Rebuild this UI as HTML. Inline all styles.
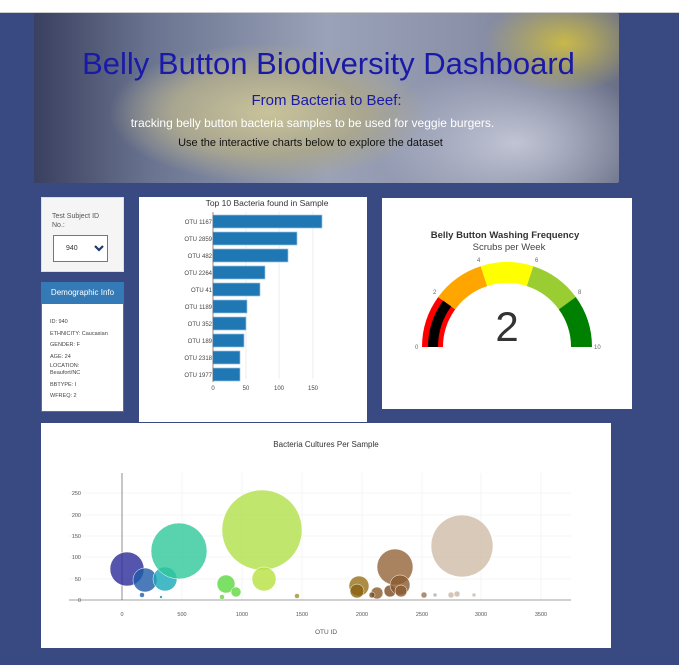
<!DOCTYPE html>
<html><head><style>
body{margin:0;width:679px;height:665px;background:#394a82;position:relative;overflow:hidden;font-family:"Liberation Sans",sans-serif}
.top{position:absolute;left:0;top:0;width:679px;height:12px;background:#fff;border-bottom:1px solid #ccc}
.banner{position:absolute;left:34px;top:13px;width:585px;height:170px;overflow:hidden;border-radius:2px;
background:radial-gradient(ellipse 160px 70px at 235px 100px,#c9c39a 0%,#a9a690 60%,rgba(140,150,170,0) 100%),
radial-gradient(ellipse 80px 50px at 530px 30px,#c8b84a 0%,rgba(150,150,120,0) 100%),
radial-gradient(ellipse 140px 80px at 480px 130px,#c0c4d4 0%,rgba(120,130,160,0) 100%),
linear-gradient(90deg,#3a4060 0%,#6a7490 20%,#9aa2b8 50%,#8a90a8 75%,#6a7088 100%)}
.banner div{position:absolute;width:100%;text-align:center}
.panel{position:absolute;background:#fff}
</style></head><body>
<div class="top"></div>
<div class="banner">
<div style="top:33px;left:2px;font-size:31px;color:#1a1aa8">Belly Button Biodiversity Dashboard</div>
<div style="top:79px;left:0;font-size:15px;color:#1a1aa8">From Bacteria to Beef:</div>
<div style="top:103px;left:-14px;font-size:12px;color:#fff">tracking belly button bacteria samples to be used for veggie burgers.</div>
<div style="top:124px;left:-16px;font-size:11px;color:#111">Use the interactive charts below to explore the dataset</div>
</div>
<div class="panel" style="left:41px;top:197px;width:83px;height:75px;background:#f5f5f5;border:1px solid #ddd;box-sizing:border-box">
<div style="position:absolute;left:10px;top:14px;font-size:7px;color:#555;line-height:9px">Test Subject ID<br>No.:</div>
<div style="position:absolute;left:11px;top:37px;width:55px;height:27px;border:1px solid #777;background:#fff;box-sizing:border-box">
<span style="position:absolute;left:12px;top:9px;font-size:7px;color:#333">940</span>
<svg style="position:absolute;left:40px;top:9px" width="10" height="7"><path d="M1 1L5 5L9 1" stroke="#1d3a6e" stroke-width="2.2" fill="none"/></svg>
</div></div>
<div class="panel" style="left:41px;top:282px;width:83px;height:130px;border:1px solid #337ab7;box-sizing:border-box">
<div style="height:21px;background:#337ab7;color:#fff;font-size:8px;text-align:center;line-height:20px">Demographic Info</div>
<div style="padding:13px 0 0 8px;font-size:5.5px;color:#444;line-height:11.5px">ID: 940<br>ETHNICITY: Caucasian<br>GENDER: F<br>AGE: 24<br><span style="line-height:7px;display:inline-block">LOCATION:<br>Beaufort/NC</span><br>BBTYPE: I<br>WFREQ: 2</div>
</div>
<div class="panel" style="left:139px;top:197px;width:228px;height:225px">
<svg width="228" height="225" font-family="Liberation Sans" font-size="6" fill="#444">
<text x="128" y="9" font-size="8.5" text-anchor="middle" fill="#333">Top 10 Bacteria found in Sample</text>
<g stroke="#eee"><line x1="107" y1="15" x2="107" y2="182"/><line x1="140" y1="15" x2="140" y2="182"/><line x1="174" y1="15" x2="174" y2="182"/></g>
<g fill="#1f77b4" stroke="#9cc5e8" stroke-width="0.7">
<rect x="74" y="18" width="109" height="13"/><rect x="74" y="35" width="84" height="13"/><rect x="74" y="52" width="75" height="13"/><rect x="74" y="69" width="52" height="13"/><rect x="74" y="86" width="47" height="13"/><rect x="74" y="103" width="34" height="13"/><rect x="74" y="120" width="33" height="13"/><rect x="74" y="137" width="31" height="13"/><rect x="74" y="154" width="27" height="13"/><rect x="74" y="171" width="27" height="13"/></g>
<line x1="74" y1="15" x2="74" y2="185" stroke="#444" stroke-width="0.6"/>
<g text-anchor="end"><text x="73" y="27">OTU 1167</text><text x="73" y="44">OTU 2859</text><text x="73" y="61">OTU 482</text><text x="73" y="78">OTU 2264</text><text x="73" y="95">OTU 41</text><text x="73" y="112">OTU 1189</text><text x="73" y="129">OTU 352</text><text x="73" y="146">OTU 189</text><text x="73" y="163">OTU 2318</text><text x="73" y="180">OTU 1977</text></g>
<g text-anchor="middle"><text x="74" y="193">0</text><text x="107" y="193">50</text><text x="140" y="193">100</text><text x="174" y="193">150</text></g>
</svg></div>
<div class="panel" style="left:382px;top:198px;width:250px;height:211px">
<svg width="250" height="211" font-family="Liberation Sans">
<text x="123" y="40" font-size="9.5" font-weight="bold" text-anchor="middle" fill="#333">Belly Button Washing Frequency</text>
<text x="127" y="52" font-size="9.5" text-anchor="middle" fill="#444">Scrubs per Week</text>
<g transform="translate(125,149)">
<path d="M-85 0A85 85 0 0 1 -68.8 -50 L-51.8 -37.6 A64 64 0 0 0 -64 0Z" fill="#f00"/>
<path d="M-68.8 -50A85 85 0 0 1 -26.3 -80.8 L-19.8 -60.9 A64 64 0 0 0 -51.8 -37.6Z" fill="#ffa500"/>
<path d="M-26.3 -80.8A85 85 0 0 1 26.3 -80.8 L19.8 -60.9 A64 64 0 0 0 -19.8 -60.9Z" fill="#ff0"/>
<path d="M26.3 -80.8A85 85 0 0 1 68.8 -50 L51.8 -37.6 A64 64 0 0 0 19.8 -60.9Z" fill="#9acd32"/>
<path d="M68.8 -50A85 85 0 0 1 85 0 L64 0 A64 64 0 0 0 51.8 -37.6Z" fill="#008000"/>
<path d="M-79 0A79 79 0 0 1 -63.9 -46.4 L-55.8 -40.6 A69 69 0 0 0 -69 0Z" fill="#000"/>
<g font-size="6" fill="#666"><text x="-92" y="2">0</text><text x="-74" y="-53">2</text><text x="-30" y="-85">4</text><text x="28" y="-85">6</text><text x="71" y="-53">8</text><text x="87" y="2">10</text></g>
<text x="0" y="-6" font-size="42" text-anchor="middle" fill="#333">2</text>
</g></svg></div>
<div class="panel" style="left:41px;top:423px;width:570px;height:225px">
<svg width="570" height="225" font-family="Liberation Sans" font-size="5.5" fill="#555">
<text x="285" y="24" font-size="8" text-anchor="middle" fill="#333">Bacteria Cultures Per Sample</text>
<g stroke="#eee" stroke-width="0.6">
<line x1="28" y1="156" x2="530" y2="156"/><line x1="28" y1="134" x2="530" y2="134"/><line x1="28" y1="113" x2="530" y2="113"/><line x1="28" y1="92" x2="530" y2="92"/><line x1="28" y1="70" x2="530" y2="70"/>
<line x1="141" y1="50" x2="141" y2="177"/><line x1="201" y1="50" x2="201" y2="177"/><line x1="261" y1="50" x2="261" y2="177"/><line x1="321" y1="50" x2="321" y2="177"/><line x1="381" y1="50" x2="381" y2="177"/><line x1="440" y1="50" x2="440" y2="177"/><line x1="500" y1="50" x2="500" y2="177"/></g>
<line x1="81" y1="50" x2="81" y2="177" stroke="#444" stroke-width="0.6"/>
<line x1="28" y1="177" x2="530" y2="177" stroke="#444" stroke-width="0.6"/>
<g stroke="#fff" stroke-width="0.5" fill-opacity="0.8">
<circle cx="86" cy="146" r="17" fill="#2a2a98"/>
<circle cx="104" cy="157" r="12" fill="#1e5aa8"/>
<circle cx="124" cy="156" r="12" fill="#18a8b8"/>
<circle cx="138" cy="128" r="28" fill="#2ec898"/>
<circle cx="221" cy="107" r="40" fill="#b0e048"/>
<circle cx="223" cy="156" r="12" fill="#b8e040"/>
<circle cx="185" cy="161" r="9" fill="#5cd840"/>
<circle cx="195" cy="169" r="5" fill="#60d840"/>
<circle cx="181" cy="174" r="2.5" fill="#70d040"/>
<circle cx="101" cy="172" r="2.5" fill="#2060a8"/>
<circle cx="120" cy="174" r="1.5" fill="#1890b8"/>
<circle cx="318" cy="163" r="10" fill="#987018"/>
<circle cx="316" cy="168" r="7" fill="#8a6010"/>
<circle cx="336" cy="170" r="6" fill="#8a5a28"/>
<circle cx="349" cy="168" r="6" fill="#7a4a20"/>
<circle cx="354" cy="144" r="18" fill="#946438"/>
<circle cx="359" cy="162" r="10" fill="#8a5a30"/>
<circle cx="360" cy="168" r="6" fill="#8a5a30"/>
<circle cx="331" cy="172" r="3" fill="#7a4a20"/>
<circle cx="256" cy="173" r="2.5" fill="#a09030"/>
<circle cx="383" cy="172" r="3" fill="#9a7050"/>
<circle cx="421" cy="123" r="31" fill="#cfbca8"/>
<circle cx="410" cy="172" r="3" fill="#c8b8a8"/>
<circle cx="416" cy="171" r="3" fill="#c8b8a8"/>
<circle cx="394" cy="172" r="2" fill="#b8a898"/>
<circle cx="433" cy="172" r="2" fill="#c8b8a8"/>
</g>
<g text-anchor="end"><text x="40" y="179">0</text><text x="40" y="158">50</text><text x="40" y="136">100</text><text x="40" y="115">150</text><text x="40" y="94">200</text><text x="40" y="72">250</text></g>
<g text-anchor="middle"><text x="81" y="193">0</text><text x="141" y="193">500</text><text x="201" y="193">1000</text><text x="261" y="193">1500</text><text x="321" y="193">2000</text><text x="381" y="193">2500</text><text x="440" y="193">3000</text><text x="500" y="193">3500</text>
<text x="285" y="211" font-size="6.5">OTU ID</text></g>
</svg></div>
</body></html>
